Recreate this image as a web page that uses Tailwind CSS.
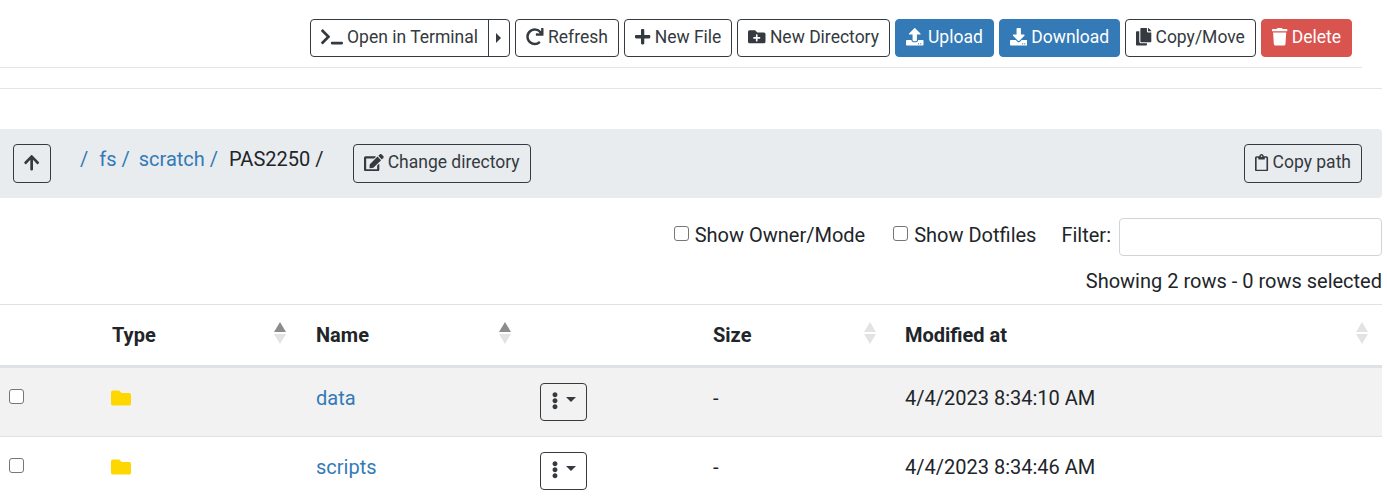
<!doctype html>
<html lang="en">
<head>
<meta charset="UTF-8">
<title>Files</title>
<script src="https://cdn.jsdelivr.net/npm/@tailwindcss/browser@4"></script>
</head>
<body class="bg-white font-['Roboto',sans-serif] text-[#212529] overflow-hidden">
<div class="w-[1382px]">
  <!-- toolbar -->
  <div class="flex justify-end gap-[5px] pt-[19px] pr-[30px] h-[67px]">
    <div class="flex h-[38px] rounded-[4px] border border-[#343a40] text-[#343a40] text-[17.5px]">
      <span class="flex items-center gap-[4px] pl-[10px] pr-[10px] pb-[2px] border-r border-[#343a40]">
        <svg class="h-[17.5px] w-[22px] fill-current" viewBox="0 0 640 512"><path d="M257.981 272.971L63.638 467.314c-9.373 9.373-24.569 9.373-33.941 0L7.029 444.647c-9.357-9.357-9.375-24.522-.04-33.901L161.011 256 6.99 101.255c-9.335-9.379-9.317-24.544.04-33.901l22.667-22.667c9.373-9.373 24.569-9.373 33.941 0L257.981 239.03c9.373 9.372 9.373 24.568 0 33.941zM640 456v-32c0-13.255-10.745-24-24-24H312c-13.255 0-24 10.745-24 24v32c0 13.255 10.745 24 24 24h304c13.255 0 24-10.745 24-24z"/></svg>
        Open in Terminal
      </span>
      <span class="flex items-center justify-center w-[20px]"><span class="border-y-[5px] border-l-[5px] border-y-transparent border-l-[#343a40]"></span></span>
    </div>
    <button class="flex items-center gap-[4px] h-[38px] px-[10.5px] pb-[2px] rounded-[4px] border border-[#343a40] text-[#343a40] text-[17.5px]">
      <svg class="size-[17.5px] fill-current" viewBox="0 0 512 512"><path d="M500.33 0h-47.41a12 12 0 0 0-12 12.57l4 82.76A247.42 247.42 0 0 0 256 8C119.34 8 7.9 119.53 8 256.19 8.1 393.07 119.1 504 256 504a247.1 247.1 0 0 0 166.18-63.91 12 12 0 0 0 .48-17.43l-34-34a12 12 0 0 0-16.38-.55A176 176 0 1 1 402.1 157.8l-101.53-4.87a12 12 0 0 0-12.57 12v47.41a12 12 0 0 0 12 12h200.33a12 12 0 0 0 12-12V12a12 12 0 0 0-12-12z"/></svg>
      Refresh
    </button>
    <button class="flex items-center gap-[4px] h-[38px] px-[10px] pb-[2px] rounded-[4px] border border-[#343a40] text-[#343a40] text-[17.5px]">
      <svg class="h-[17.5px] w-[15.3px] fill-current" viewBox="0 0 448 512"><path d="M416 208H272V64c0-17.67-14.33-32-32-32h-32c-17.67 0-32 14.33-32 32v144H32c-17.67 0-32 14.33-32 32v32c0 17.67 14.33 32 32 32h144v144c0 17.67 14.33 32 32 32h32c17.67 0 32-14.33 32-32V304h144c17.67 0 32-14.33 32-32v-32c0-17.67-14.33-32-32-32z"/></svg>
      New File
    </button>
    <button class="flex items-center gap-[4px] h-[38px] px-[10px] pb-[2px] rounded-[4px] border border-[#343a40] text-[#343a40] text-[17.5px]">
      <svg class="size-[17.5px] fill-current" viewBox="0 0 512 512"><path d="M464,128H272L208,64H48A48,48,0,0,0,0,112V400a48,48,0,0,0,48,48H464a48,48,0,0,0,48-48V176A48,48,0,0,0,464,128ZM359.5,296a16,16,0,0,1-16,16h-64v64a16,16,0,0,1-16,16h-16a16,16,0,0,1-16-16V312h-64a16,16,0,0,1-16-16V280a16,16,0,0,1,16-16h64V200a16,16,0,0,1,16-16h16a16,16,0,0,1,16,16v64h64a16,16,0,0,1,16,16Z"/></svg>
      New Directory
    </button>
    <button class="flex items-center gap-[4px] h-[38px] px-[10.5px] pb-[2px] rounded-[4px] border border-[#337ab7] bg-[#337ab7] text-white text-[17.5px]">
      <svg class="size-[17.5px] fill-current" viewBox="0 0 512 512"><path d="M296 384h-80c-13.3 0-24-10.7-24-24V192h-87.7c-17.8 0-26.7-21.5-14.1-34.1L242.3 5.7c7.5-7.5 19.8-7.5 27.3 0l152.2 152.2c12.6 12.6 3.7 34.1-14.1 34.1H320v168c0 13.3-10.7 24-24 24zm216-8v112c0 13.3-10.7 24-24 24H24c-13.3 0-24-10.7-24-24V376c0-13.3 10.7-24 24-24h136v8c0 30.9 25.1 56 56 56h80c30.9 0 56-25.1 56-56v-8h136c13.3 0 24 10.7 24 24zm-124 88c0-11-9-20-20-20s-20 9-20 20 9 20 20 20 20-9 20-20zm64 0c0-11-9-20-20-20s-20 9-20 20 9 20 20 20 20-9 20-20z"/></svg>
      Upload
    </button>
    <button class="flex items-center gap-[4px] h-[38px] px-[9.5px] pb-[2px] rounded-[4px] border border-[#337ab7] bg-[#337ab7] text-white text-[17.5px]">
      <svg class="size-[17.5px] fill-current" viewBox="0 0 512 512"><path d="M216 0h80c13.3 0 24 10.7 24 24v168h87.7c17.8 0 26.7 21.5 14.1 34.1L269.7 378.3c-7.5 7.5-19.8 7.5-27.3 0L90.1 226.1c-12.6-12.6-3.7-34.1 14.1-34.1H192V24c0-13.3 10.7-24 24-24zm296 376v112c0 13.3-10.7 24-24 24H24c-13.3 0-24-10.7-24-24V376c0-13.3 10.7-24 24-24h146.7l49 49c20.1 20.1 52.5 20.1 72.6 0l49-49H488c13.3 0 24 10.7 24 24zm-124 88c0-11-9-20-20-20s-20 9-20 20 9 20 20 20 20-9 20-20zm64 0c0-11-9-20-20-20s-20 9-20 20 9 20 20 20 20-9 20-20z"/></svg>
      Download
    </button>
    <button class="flex items-center gap-[4px] h-[38px] px-[10.5px] pb-[2px] rounded-[4px] border border-[#343a40] text-[#343a40] text-[17.5px]">
      <svg class="h-[17.5px] w-[15.3px] fill-current" viewBox="0 0 448 512"><path d="M320 448v40c0 13.255-10.745 24-24 24H24c-13.255 0-24-10.745-24-24V120c0-13.255 10.745-24 24-24h72v296c0 30.879 25.121 56 56 56h168zm0-344V0H152c-13.255 0-24 10.745-24 24v368c0 13.255 10.745 24 24 24h272c13.255 0 24-10.745 24-24V128H344c-13.2 0-24-10.8-24-24zm120.971-31.029L375.029 7.029A24 24 0 0 0 358.059 0H352v96h96v-6.059a24 24 0 0 0-7.029-16.97z"/></svg>
      Copy/Move
    </button>
    <button class="flex items-center gap-[4px] h-[38px] px-[10px] pb-[2px] rounded-[4px] border border-[#d9534f] bg-[#d9534f] text-white text-[17.5px]">
      <svg class="h-[17.5px] w-[15.3px] fill-current" viewBox="0 0 448 512"><path d="M432 32H312l-9.4-18.7A24 24 0 0 0 281.1 0H166.8a23.72 23.72 0 0 0-21.4 13.3L136 32H16A16 16 0 0 0 0 48v32a16 16 0 0 0 16 16h416a16 16 0 0 0 16-16V48a16 16 0 0 0-16-16zM53.2 467a48 48 0 0 0 47.9 45h245.8a48 48 0 0 0 47.9-45L416 128H32z"/></svg>
      Delete
    </button>
  </div>
  <div class="mr-[20px] h-px bg-[#e5e5e5]"></div>
  <div class="mt-[20px] h-px bg-[#e5e5e5]"></div>

  <!-- path bar -->
  <div class="mt-[40px] flex items-center h-[69px] pl-[13px] pr-[20px] bg-[#e9ecef] rounded-r-[4px]">
    <button class="flex items-center justify-center w-[38px] h-[39px] pb-[2px] rounded-[4px] border border-[#343a40] text-[#343a40]">
      <svg class="h-[17.5px] w-[15.3px] fill-current" viewBox="0 0 448 512"><path d="M34.9 289.5l-22.2-22.2c-9.4-9.4-9.4-24.6 0-33.9L207 39c9.4-9.4 24.6-9.4 33.9 0l194.3 194.3c9.4 9.4 9.4 24.6 0 33.9L413 289.4c-9.5 9.5-25 9.3-34.3-.4L264 168.6V456c0 13.3-10.7 24-24 24h-32c-13.3 0-24-10.7-24-24V168.6L69.2 289.1c-9.3 9.8-24.8 10-34.3.4z"/></svg>
    </button>
    <div class="flex ml-[29px] w-[273px] text-[20px] mb-[10px]">
      <a class="text-[#337ab7] mr-[11px]">/</a>
      <a class="text-[#337ab7] mr-[9px]">fs /</a>
      <a class="text-[#337ab7] mr-[11px]">scratch /</a>
      <span>PAS2250 /</span>
    </div>
    <button class="flex items-center gap-[4px] h-[39px] px-[10px] pb-[2px] rounded-[4px] border border-[#343a40] text-[#343a40] text-[17.5px]">
      <svg class="h-[17.5px] w-[19.7px] fill-current" viewBox="0 0 576 512"><path d="M402.6 83.2l90.2 90.2c3.8 3.8 3.8 10 0 13.8L274.4 405.6l-92.8 10.3c-12.4 1.4-22.9-9.1-21.5-21.5l10.3-92.8L388.8 83.2c3.8-3.8 10-3.8 13.8 0zm162-22.9l-48.8-48.8c-15.2-15.2-39.9-15.2-55.2 0l-35.4 35.4c-3.8 3.8-3.8 10 0 13.8l90.2 90.2c3.8 3.8 10 3.8 13.8 0l35.4-35.4c15.2-15.3 15.2-40 0-55.2zM384 346.2V448H64V128h229.8c3.2 0 6.2-1.3 8.5-3.5l40-40c7.6-7.6 2.2-20.5-8.5-20.5H48C21.5 64 0 85.5 0 112v352c0 26.5 21.5 48 48 48h352c26.5 0 48-21.5 48-48V306.2c0-10.7-12.9-16-20.5-8.5l-40 40c-2.2 2.3-3.5 5.3-3.5 8.5z"/></svg>
      Change directory
    </button>
    <button class="ml-auto flex items-center gap-[4px] h-[39px] px-[10px] pb-[2px] rounded-[4px] border border-[#343a40] text-[#343a40] text-[17.5px]">
      <svg class="h-[17.5px] w-[13.1px] fill-current" viewBox="0 0 384 512"><path d="M336 64h-80c0-35.3-28.7-64-64-64s-64 28.7-64 64H48C21.5 64 0 85.5 0 112v352c0 26.5 21.5 48 48 48h288c26.5 0 48-21.5 48-48V112c0-26.5-21.5-48-48-48zM192 40c13.3 0 24 10.7 24 24s-10.7 24-24 24-24-10.7-24-24 10.7-24 24-24zm144 418c0 3.3-2.7 6-6 6H54c-3.3 0-6-2.7-6-6V118c0-3.3 2.7-6 6-6h42v36c0 6.6 5.4 12 12 12h168c6.6 0 12-5.4 12-12v-36h42c3.3 0 6 2.7 6 6z"/></svg>
      Copy path
    </button>
  </div>

  <!-- filters -->
  <div class="mt-[20px] flex items-center justify-end h-[38px] text-[20px]">
    <label class="flex items-center mr-[28px] pb-[4px]">
      <input type="checkbox" class="appearance-none size-[15px] rounded-[3px] border border-[#767676] bg-white mr-[6px] mb-[3px]">
      Show Owner/Mode
    </label>
    <label class="flex items-center mr-[25px] pb-[4px]">
      <input type="checkbox" class="appearance-none size-[15px] rounded-[3px] border border-[#767676] bg-white mr-[6px] mb-[3px]">
      Show Dotfiles
    </label>
    <span class="mr-[8px] pb-[4px]">Filter:</span>
    <input class="w-[263px] h-[38px] rounded-[4px] border border-[#ced4da] bg-white">
  </div>
  <div class="mt-[12px] text-right text-[20px] leading-[26px]">Showing 2 rows - 0 rows selected</div>

  <!-- table -->
  <table class="mt-[10px] w-full table-fixed border-collapse text-[20px]">
    <colgroup>
      <col class="w-[100px]"><col class="w-[204px]"><col class="w-[397px]"><col class="w-[192px]"><col>
    </colgroup>
    <thead>
      <tr class="border-t border-b-[3px] border-t-[#dee2e6] border-b-[#dee2e6] h-[62px]">
        <th></th>
        <th class="relative text-left font-bold pl-[12px]">Type
          <span class="absolute right-[18px] top-[17px] flex flex-col gap-[2px]"><i class="block border-x-[6px] border-b-[10px] border-x-transparent border-b-[#8c8c8c]"></i><i class="block border-x-[6px] border-t-[10px] border-x-transparent border-t-[#e3e3e3]"></i></span>
        </th>
        <th class="relative text-left font-bold pl-[12px]">Name
          <span class="absolute left-[195px] top-[17px] flex flex-col gap-[2px]"><i class="block border-x-[6px] border-b-[10px] border-x-transparent border-b-[#8c8c8c]"></i><i class="block border-x-[6px] border-t-[10px] border-x-transparent border-t-[#e3e3e3]"></i></span>
        </th>
        <th class="relative text-left font-bold pl-[12px]">Size
          <span class="absolute right-[17px] top-[17px] flex flex-col gap-[2px]"><i class="block border-x-[6px] border-b-[10px] border-x-transparent border-b-[#e3e3e3]"></i><i class="block border-x-[6px] border-t-[10px] border-x-transparent border-t-[#e3e3e3]"></i></span>
        </th>
        <th class="relative text-left font-bold pl-[12px]">Modified at
          <span class="absolute right-[14px] top-[17px] flex flex-col gap-[2px]"><i class="block border-x-[6px] border-b-[10px] border-x-transparent border-b-[#e3e3e3]"></i><i class="block border-x-[6px] border-t-[10px] border-x-transparent border-t-[#e3e3e3]"></i></span>
        </th>
      </tr>
    </thead>
    <tbody>
      <tr class="h-[70px] bg-[#f2f2f2] border-b border-[#dee2e6]">
        <td class="pl-[9px] align-top pt-[21px]"><input type="checkbox" class="block appearance-none size-[15px] rounded-[3px] border border-[#767676] bg-white"></td>
        <td class="pl-[11px] align-top pt-[20px]"><svg class="size-[20px] fill-[#ffd700]" viewBox="0 0 512 512"><path d="M464 128H272l-64-64H48C21.49 64 0 85.49 0 112v288c0 26.51 21.49 48 48 48h416c26.51 0 48-21.49 48-48V176c0-26.51-21.49-48-48-48z"/></svg></td>
        <td class="pl-[12px] align-top pt-[15px]">
          <div class="flex items-start"><a class="text-[#337ab7] w-[224px]">data</a>
            <button class="flex items-center justify-center gap-[8px] w-[47px] h-[38px] pb-[2px] rounded-[4px] border border-[#343a40] text-[#343a40]">
              <svg class="h-[17.5px] w-[6px] fill-current" viewBox="24 0 144 512"><path d="M96 184c39.8 0 72 32.2 72 72s-32.2 72-72 72-72-32.2-72-72 32.2-72 72-72zM24 80c0 39.8 32.2 72 72 72s72-32.2 72-72S135.8 8 96 8 24 40.2 24 80zm0 352c0 39.8 32.2 72 72 72s72-32.2 72-72-32.2-72-72-72-72 32.2-72 72z"/></svg>
              <span class="mb-[3px] border-x-[5px] border-t-[5px] border-x-transparent border-t-[#343a40]"></span>
            </button>
          </div>
        </td>
        <td class="pl-[12px] align-top pt-[15px]">-</td>
        <td class="pl-[12px] align-top pt-[15px]">4/4/2023 8:34:10 AM</td>
      </tr>
      <tr class="h-[70px]">
        <td class="pl-[9px] align-top pt-[21px]"><input type="checkbox" class="block appearance-none size-[15px] rounded-[3px] border border-[#767676] bg-white"></td>
        <td class="pl-[11px] align-top pt-[20px]"><svg class="size-[20px] fill-[#ffd700]" viewBox="0 0 512 512"><path d="M464 128H272l-64-64H48C21.49 64 0 85.49 0 112v288c0 26.51 21.49 48 48 48h416c26.51 0 48-21.49 48-48V176c0-26.51-21.49-48-48-48z"/></svg></td>
        <td class="pl-[12px] align-top pt-[15px]">
          <div class="flex items-start"><a class="text-[#337ab7] w-[224px]">scripts</a>
            <button class="flex items-center justify-center gap-[8px] w-[47px] h-[38px] pb-[2px] rounded-[4px] border border-[#343a40] text-[#343a40]">
              <svg class="h-[17.5px] w-[6px] fill-current" viewBox="24 0 144 512"><path d="M96 184c39.8 0 72 32.2 72 72s-32.2 72-72 72-72-32.2-72-72 32.2-72 72-72zM24 80c0 39.8 32.2 72 72 72s72-32.2 72-72S135.8 8 96 8 24 40.2 24 80zm0 352c0 39.8 32.2 72 72 72s72-32.2 72-72-32.2-72-72-72-72 32.2-72 72z"/></svg>
              <span class="mb-[3px] border-x-[5px] border-t-[5px] border-x-transparent border-t-[#343a40]"></span>
            </button>
          </div>
        </td>
        <td class="pl-[12px] align-top pt-[15px]">-</td>
        <td class="pl-[12px] align-top pt-[15px]">4/4/2023 8:34:46 AM</td>
      </tr>
    </tbody>
  </table>
</div>
</body>
</html>
